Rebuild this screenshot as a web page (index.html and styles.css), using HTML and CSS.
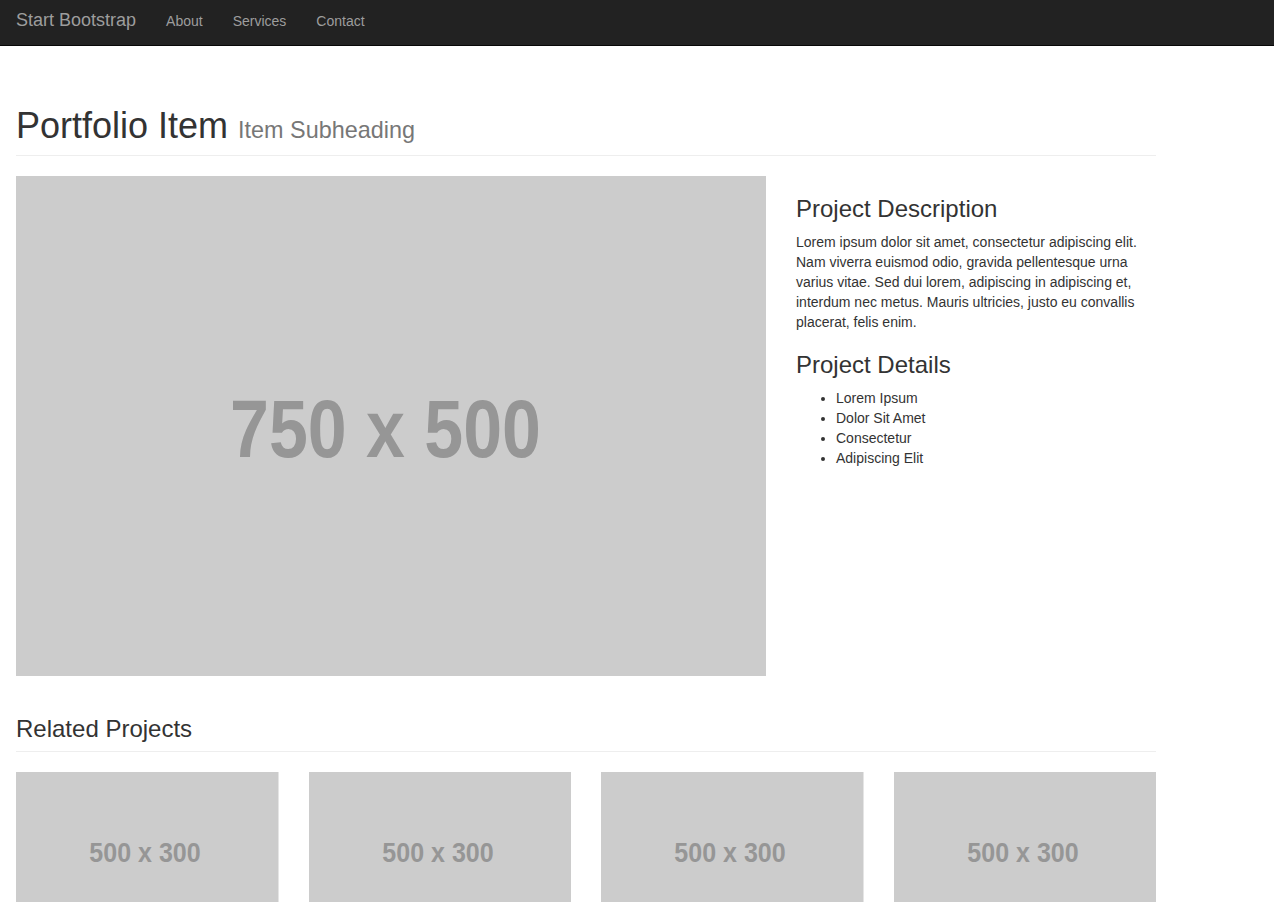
FILE: index.html
```html
<!DOCTYPE html>
<html lang="en">
<head>
<meta charset="utf-8">
<title>Portfolio Item - Start Bootstrap</title>
<link rel="stylesheet" href="styles.css">
</head>
<body>
<nav class="navbar">
  <div class="navbar-inner">
    <a class="brand" href="#">Start Bootstrap</a>
    <ul class="nav-links">
      <li><a href="#">About</a></li>
      <li><a href="#">Services</a></li>
      <li><a href="#">Contact</a></li>
    </ul>
  </div>
</nav>

<main class="container">
  <h1 class="page-header">Portfolio Item <small>Item Subheading</small></h1>

  <div class="item-row">
    <div class="item-image">
      <svg class="placeholder" viewBox="0 0 750 500" width="750" height="500">
        <rect width="750" height="500" fill="#cccccc"/>
        <text x="214" y="281" font-size="82" textLength="311" lengthAdjust="spacingAndGlyphs" class="ph-text">750 x 500</text>
      </svg>
    </div>
    <div class="item-info">
      <h3>Project Description</h3>
      <p>Lorem ipsum dolor sit amet, consectetur adipiscing elit. Nam viverra euismod odio, gravida pellentesque urna varius vitae. Sed dui lorem, adipiscing in adipiscing et, interdum nec metus. Mauris ultricies, justo eu convallis placerat, felis enim.</p>
      <h3>Project Details</h3>
      <ul>
        <li>Lorem Ipsum</li>
        <li>Dolor Sit Amet</li>
        <li>Consectetur</li>
        <li>Adipiscing Elit</li>
      </ul>
    </div>
  </div>

  <h3 class="page-header related-header">Related Projects</h3>

  <div class="related-grid">
    <a href="#" class="thumb">
      <svg class="placeholder" viewBox="0 0 262.5 157.5">
        <rect width="262.5" height="157.5" fill="#cccccc"/>
        <text x="73.3" y="90" font-size="28.4" textLength="111.4" lengthAdjust="spacingAndGlyphs" class="ph-text">500 x 300</text>
      </svg>
    </a>
    <a href="#" class="thumb">
      <svg class="placeholder" viewBox="0 0 262.5 157.5">
        <rect width="262.5" height="157.5" fill="#cccccc"/>
        <text x="73.3" y="90" font-size="28.4" textLength="111.4" lengthAdjust="spacingAndGlyphs" class="ph-text">500 x 300</text>
      </svg>
    </a>
    <a href="#" class="thumb">
      <svg class="placeholder" viewBox="0 0 262.5 157.5">
        <rect width="262.5" height="157.5" fill="#cccccc"/>
        <text x="73.3" y="90" font-size="28.4" textLength="111.4" lengthAdjust="spacingAndGlyphs" class="ph-text">500 x 300</text>
      </svg>
    </a>
    <a href="#" class="thumb">
      <svg class="placeholder" viewBox="0 0 262.5 157.5">
        <rect width="262.5" height="157.5" fill="#cccccc"/>
        <text x="73.3" y="90" font-size="28.4" textLength="111.4" lengthAdjust="spacingAndGlyphs" class="ph-text">500 x 300</text>
      </svg>
    </a>
  </div>
</main>
</body>
</html>
```

FILE: styles.css
```css
* { box-sizing: border-box; }

html, body {
  margin: 0;
  padding: 0;
  background: #fff;
}

body {
  font-family: "Liberation Sans", Arial, Helvetica, sans-serif;
  font-size: 14px;
  line-height: 20px;
  color: #333;
}

a { text-decoration: none; }

/* Navbar */
.navbar {
  background: #222;
  border-bottom: 1px solid #080808;
  height: 46px;
}

.navbar-inner {
  display: flex;
  align-items: flex-start;
  padding-left: 1px;
}

.brand {
  display: block;
  padding: 10px 15px 0;
  font-size: 18px;
  line-height: 20px;
  color: #9d9d9d;
}

.nav-links {
  display: flex;
  list-style: none;
  margin: 0;
  padding: 0;
}

.nav-links a {
  display: block;
  padding: 11px 15px 0;
  line-height: 20px;
  font-size: 14px;
  color: #9d9d9d;
}

/* Content */
.container {
  width: 1140px;
  margin-left: 16px;
  padding-top: 20px;
}

.page-header {
  margin: 40px 0 20px;
  padding-bottom: 9px;
  border-bottom: 1px solid #eee;
  font-weight: 500;
}

h1.page-header {
  font-size: 36px;
  line-height: 39.6px;
  font-weight: normal;
}

h1 small {
  font-size: 65%;
  color: #777;
  font-weight: normal;
  line-height: 1;
}

.item-row {
  display: grid;
  grid-template-columns: 750px 360px;
  column-gap: 30px;
}

.item-image {
  height: 500px;
}

.placeholder {
  display: block;
}

.ph-text {
  font-family: "Liberation Sans", Arial, sans-serif;
  font-weight: bold;
  fill: #969696;
}

.item-info h3 {
  font-size: 24px;
  line-height: 26.4px;
  font-weight: normal;
  margin: 20px 0 10px;
}

.item-info p {
  margin: 0 0 10px;
}

.item-info ul {
  margin: 0 0 10px;
  padding-left: 40px;
}

.related-header {
  font-size: 24px;
  line-height: 26.4px;
  font-weight: normal;
}

.related-grid {
  display: grid;
  grid-template-columns: repeat(4, 1fr);
  column-gap: 30px;
}

.thumb {
  display: block;
  margin-bottom: 30px;
}

.thumb .placeholder {
  width: 100%;
  height: auto;
}
```
